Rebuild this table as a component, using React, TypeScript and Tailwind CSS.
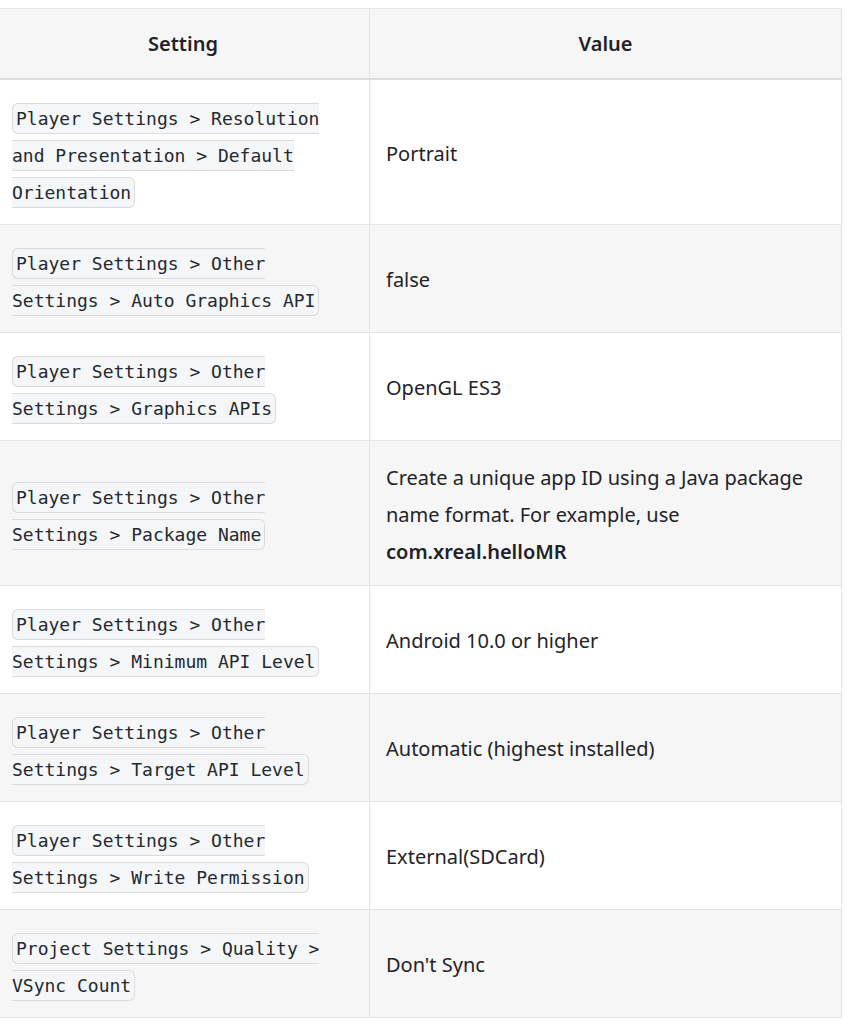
import React from "react";

const rows: { setting: string; value: React.ReactNode }[] = [
  { setting: "Player Settings > Resolution and Presentation > Default Orientation", value: "Portrait" },
  { setting: "Player Settings > Other Settings > Auto Graphics API", value: "false" },
  { setting: "Player Settings > Other Settings > Graphics APIs", value: "OpenGL ES3" },
  {
    setting: "Player Settings > Other Settings > Package Name",
    value: (
      <>
        Create a unique app ID using a Java package name format. For example, use{" "}
        <strong className="font-semibold">com.xreal.helloMR</strong>
      </>
    ),
  },
  { setting: "Player Settings > Other Settings > Minimum API Level", value: "Android 10.0 or higher" },
  { setting: "Player Settings > Other Settings > Target API Level", value: "Automatic (highest installed)" },
  { setting: "Player Settings > Other Settings > Write Permission", value: "External(SDCard)" },
  { setting: "Project Settings > Quality > VSync Count", value: "Don't Sync" },
];

const mono = { fontFamily: '"DejaVu Sans Mono", "Liberation Mono", monospace' };

export default function App() {
  return (
    <div
      className="bg-white w-[860px] h-[1024px] overflow-hidden pt-2 text-[#1f2328]"
      style={{ fontFamily: '"Noto Sans", "Open Sans", sans-serif' }}
    >
      <table className="ml-[-4px] w-[846px] border-collapse text-[20px] leading-[37px]">
        <colgroup>
          <col className="w-[373px]" />
          <col />
        </colgroup>
        <thead>
          <tr className="bg-[#f6f6f6]">
            <th className="h-[70px] border border-[#e4e4e6] border-b-2 border-b-[#dcdce0] font-semibold text-center px-4 text-[20px]">
              Setting
            </th>
            <th className="h-[70px] border border-[#e4e4e6] border-b-2 border-b-[#dcdce0] font-semibold text-center px-4 text-[20px]">
              Value
            </th>
          </tr>
        </thead>
        <tbody>
          {rows.map((r, i) => (
            <tr key={i} className={i % 2 === 1 ? "bg-[#f6f6f6]" : "bg-white"}>
              <td
                className="border border-[#e4e4e6] pl-[15px] pr-4 pt-[20px] pb-[13px] align-middle text-[18px] leading-[37px]"
                style={mono}
              >
                <code
                  className="bg-[#f5f6f8] border border-[#d9dbde] rounded-[6px] px-[3px] py-[4px] text-[#24292f]"
                  style={mono}
                >
                  {r.setting}
                </code>
              </td>
              <td className="border border-[#e4e4e6] px-4 pt-[18px] pb-[15px] align-middle">{r.value}</td>
            </tr>
          ))}
        </tbody>
      </table>
    </div>
  );
}
